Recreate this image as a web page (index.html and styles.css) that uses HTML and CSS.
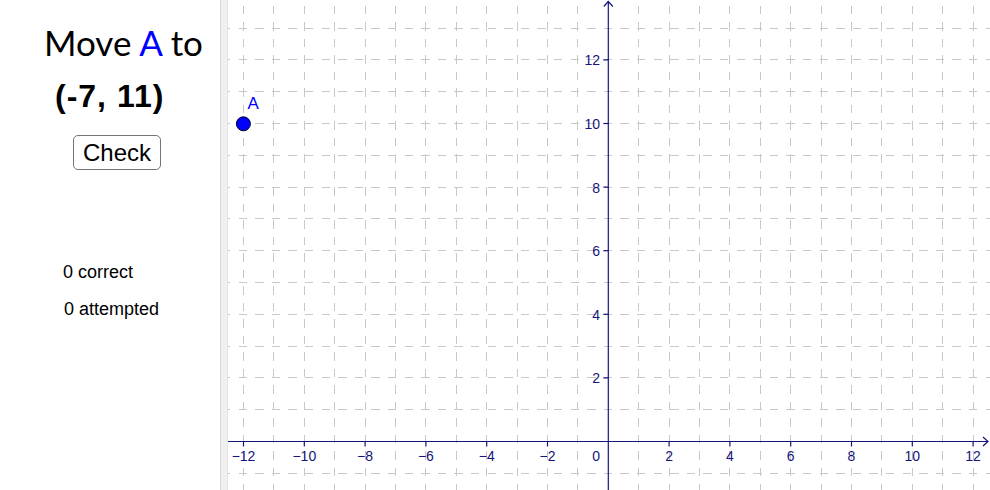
FILE: index.html
```html
<!DOCTYPE html>
<html>
<head>
<meta charset="utf-8">
<link rel="stylesheet" href="styles.css">
</head>
<body>
<div class="app">
  <div class="panel">
    <div class="title">Move <span class="pt">A</span> to</div>
    <div class="target">(-7, 11)</div>
    <button class="check">Check</button>
    <div class="stat stat-correct">0 correct</div>
    <div class="stat stat-attempted">0 attempted</div>
  </div>
  <div class="divider"></div>
  <div class="graphics">
    <svg class="plot" width="762" height="490" viewBox="0 0 762 490">
      <g class="grid">
        <line x1="15.5" y1="-10.7" x2="15.5" y2="490"/>
        <line x1="45.9" y1="-10.7" x2="45.9" y2="490"/>
        <line x1="76.3" y1="-10.7" x2="76.3" y2="490"/>
        <line x1="106.7" y1="-10.7" x2="106.7" y2="490"/>
        <line x1="137.1" y1="-10.7" x2="137.1" y2="490"/>
        <line x1="167.5" y1="-10.7" x2="167.5" y2="490"/>
        <line x1="197.9" y1="-10.7" x2="197.9" y2="490"/>
        <line x1="228.3" y1="-10.7" x2="228.3" y2="490"/>
        <line x1="258.7" y1="-10.7" x2="258.7" y2="490"/>
        <line x1="289.1" y1="-10.7" x2="289.1" y2="490"/>
        <line x1="319.5" y1="-10.7" x2="319.5" y2="490"/>
        <line x1="349.9" y1="-10.7" x2="349.9" y2="490"/>
        <line x1="410.7" y1="-10.7" x2="410.7" y2="490"/>
        <line x1="441.1" y1="-10.7" x2="441.1" y2="490"/>
        <line x1="471.5" y1="-10.7" x2="471.5" y2="490"/>
        <line x1="501.9" y1="-10.7" x2="501.9" y2="490"/>
        <line x1="532.3" y1="-10.7" x2="532.3" y2="490"/>
        <line x1="562.7" y1="-10.7" x2="562.7" y2="490"/>
        <line x1="593.1" y1="-10.7" x2="593.1" y2="490"/>
        <line x1="623.5" y1="-10.7" x2="623.5" y2="490"/>
        <line x1="653.9" y1="-10.7" x2="653.9" y2="490"/>
        <line x1="684.3" y1="-10.7" x2="684.3" y2="490"/>
        <line x1="714.7" y1="-10.7" x2="714.7" y2="490"/>
        <line x1="745.1" y1="-10.7" x2="745.1" y2="490"/>
      </g>
      <g class="grid grid-h">
        <line x1="-6" y1="28.1" x2="762" y2="28.1"/>
        <line x1="-6" y1="59.9" x2="762" y2="59.9"/>
        <line x1="-6" y1="91.7" x2="762" y2="91.7"/>
        <line x1="-6" y1="123.5" x2="762" y2="123.5"/>
        <line x1="-6" y1="155.3" x2="762" y2="155.3"/>
        <line x1="-6" y1="187.1" x2="762" y2="187.1"/>
        <line x1="-6" y1="218.9" x2="762" y2="218.9"/>
        <line x1="-6" y1="250.7" x2="762" y2="250.7"/>
        <line x1="-6" y1="282.5" x2="762" y2="282.5"/>
        <line x1="-6" y1="314.3" x2="762" y2="314.3"/>
        <line x1="-6" y1="346.1" x2="762" y2="346.1"/>
        <line x1="-6" y1="377.9" x2="762" y2="377.9"/>
        <line x1="-6" y1="409.7" x2="762" y2="409.7"/>
        <line x1="-6" y1="473.3" x2="762" y2="473.3"/>
      </g>
      <g class="axis">
        <line x1="0" y1="441.5" x2="760" y2="441.5"/>
        <line x1="380.3" y1="1.5" x2="380.3" y2="490"/>
        <polyline points="755,437 760,441.5 755,446"/>
        <polyline points="375.8,6.5 380.3,1.5 384.8,6.5"/>
        <line x1="15.5" y1="441.5" x2="15.5" y2="446.5"/>
        <line x1="76.3" y1="441.5" x2="76.3" y2="446.5"/>
        <line x1="137.1" y1="441.5" x2="137.1" y2="446.5"/>
        <line x1="197.9" y1="441.5" x2="197.9" y2="446.5"/>
        <line x1="258.7" y1="441.5" x2="258.7" y2="446.5"/>
        <line x1="319.5" y1="441.5" x2="319.5" y2="446.5"/>
        <line x1="441.1" y1="441.5" x2="441.1" y2="446.5"/>
        <line x1="501.9" y1="441.5" x2="501.9" y2="446.5"/>
        <line x1="562.7" y1="441.5" x2="562.7" y2="446.5"/>
        <line x1="623.5" y1="441.5" x2="623.5" y2="446.5"/>
        <line x1="684.3" y1="441.5" x2="684.3" y2="446.5"/>
        <line x1="745.1" y1="441.5" x2="745.1" y2="446.5"/>
        <line x1="375.3" y1="377.9" x2="380.3" y2="377.9"/>
        <line x1="375.3" y1="314.3" x2="380.3" y2="314.3"/>
        <line x1="375.3" y1="250.7" x2="380.3" y2="250.7"/>
        <line x1="375.3" y1="187.1" x2="380.3" y2="187.1"/>
        <line x1="375.3" y1="123.5" x2="380.3" y2="123.5"/>
        <line x1="375.3" y1="59.9" x2="380.3" y2="59.9"/>
      </g>
      <g class="xlabels">
        <text x="15.5" y="461">−12</text>
        <text x="76.3" y="461">−10</text>
        <text x="137.1" y="461">−8</text>
        <text x="197.9" y="461">−6</text>
        <text x="258.7" y="461">−4</text>
        <text x="319.5" y="461">−2</text>
        <text x="441.1" y="461">2</text>
        <text x="501.9" y="461">4</text>
        <text x="562.7" y="461">6</text>
        <text x="623.5" y="461">8</text>
        <text x="684.3" y="461">10</text>
        <text x="745.1" y="461">12</text>
      </g>
      <g class="ylabels">
        <text x="372" y="461">0</text>
        <text x="372" y="383.4">2</text>
        <text x="372" y="319.8">4</text>
        <text x="372" y="256.2">6</text>
        <text x="372" y="192.6">8</text>
        <text x="372" y="129">10</text>
        <text x="372" y="65.4">12</text>
      </g>
      <circle class="point" cx="15.4" cy="123.8" r="7"/>
      <text class="point-label" x="19.5" y="109.3">A</text>
    </svg>
  </div>
</div>
</body>
</html>
```

FILE: styles.css
```css
html, body {
  margin: 0;
  padding: 0;
  background: #ffffff;
}

body {
  width: 990px;
  height: 490px;
  overflow: hidden;
  font-family: "Liberation Sans", Arial, sans-serif;
  color: #000;
}

.app {
  display: flex;
  width: 990px;
  height: 490px;
}

.panel {
  width: 220px;
  flex: none;
  display: flex;
  flex-direction: column;
  align-items: flex-start;
  padding-top: 22px;
  box-sizing: border-box;
}

.title {
  font-family: Lato, "DejaVu Sans", sans-serif;
  font-size: 35px;
  line-height: 40px;
  height: 40px;
  margin-left: 44px;
  white-space: nowrap;
}

.title .pt {
  color: #0000ff;
}

.target {
  font-family: "Liberation Sans", Arial, sans-serif;
  font-weight: bold;
  font-size: 32px;
  letter-spacing: 1px;
  line-height: 36px;
  height: 36px;
  margin-top: 16px;
  margin-left: 55px;
  white-space: nowrap;
}

.check {
  margin-top: 21px;
  margin-left: 73px;
  width: 88px;
  height: 35px;
  padding: 0;
  box-sizing: border-box;
  background: #ffffff;
  border: 1.5px solid #757575;
  border-radius: 5px;
  font-family: "Liberation Sans", Arial, sans-serif;
  font-size: 24px;
  line-height: 30px;
  color: #000;
}

.stat {
  font-size: 18px;
  line-height: 22px;
  height: 22px;
  white-space: nowrap;
}

.stat-correct {
  margin-top: 91px;
  margin-left: 63px;
}

.stat-attempted {
  margin-top: 15px;
  margin-left: 64px;
}

.divider {
  width: 6px;
  flex: none;
  background: #f0f0f0;
  border-left: 1px solid #d8d8d8;
  border-right: 1px solid #e4e4e4;
}

.graphics {
  flex: 1;
  position: relative;
  overflow: hidden;
}

.plot {
  display: block;
}

.grid line {
  stroke: #c8c8c8;
  stroke-width: 1;
  stroke-dasharray: 8.3 8.2;
  shape-rendering: crispEdges;
}

.grid-h line {
  stroke-dasharray: 8.4 8.2;
}

.axis line,
.axis polyline {
  stroke: #14147a;
  stroke-width: 1.2;
  fill: none;
}

.xlabels text,
.ylabels text {
  font-family: "Liberation Sans", Arial, sans-serif;
  font-size: 14px;
  fill: #14147a;
}

.xlabels text {
  text-anchor: middle;
}

.ylabels text {
  text-anchor: end;
}

.point {
  fill: #0000ff;
  stroke: #00002a;
  stroke-width: 1;
}

.point-label {
  font-family: "Liberation Sans", Arial, sans-serif;
  font-size: 17px;
  fill: #0000ff;
}
```
